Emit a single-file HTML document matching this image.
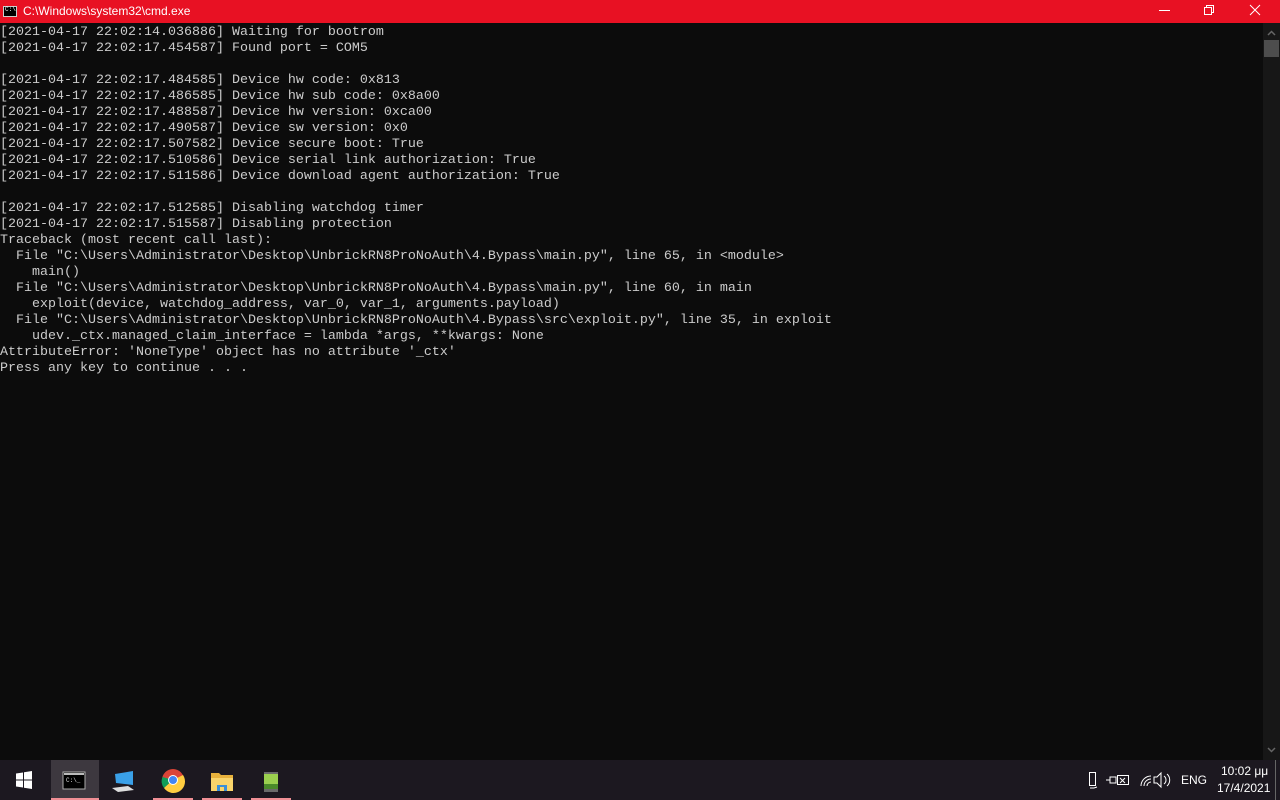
<!DOCTYPE html>
<html><head><meta charset="utf-8"><style>
*{margin:0;padding:0;box-sizing:border-box}
body{width:1280px;height:800px;overflow:hidden;background:#0c0c0c;position:relative;font-family:"Liberation Sans",sans-serif}
#title{position:absolute;left:0;top:0;width:1280px;height:23px;background:#e81123;color:#fff;font-size:12px}
#title .t{position:absolute;left:23px;top:4px}
#title .ic{position:absolute;left:3px;top:6px;width:14px;height:11px;background:#000;border:1px solid #ccc}
#title .ic:after{content:"C:\\";position:absolute;left:1px;top:-1px;font-size:6px;color:#fff;font-family:"Liberation Mono",monospace}
#con{position:absolute;left:0;top:25px;width:1263px;height:735px;background:#0c0c0c;color:#cccccc;font-family:"Liberation Mono",monospace;font-size:13.33px;line-height:16px;white-space:pre}
#sb{position:absolute;left:1263px;top:23px;width:17px;height:737px;background:#171717}
#thumb{position:absolute;left:1264px;top:40px;width:15px;height:17px;background:#4d4d4d}
#tb{position:absolute;left:0;top:760px;width:1280px;height:40px;background:#1c1820}
.u{position:absolute;top:798px;height:2px;background:#f08f95}
.tray{position:absolute;color:#fff;font-size:12px}
</style></head><body>
<div id="title"><div class="ic"></div><span class="t">C:\Windows\system32\cmd.exe</span>
<svg style="position:absolute;left:1130px;top:0" width="150" height="23">
<line x1="29" y1="10.5" x2="40" y2="10.5" stroke="#fff"/>
<rect x="74.5" y="7.5" width="7" height="7" fill="none" stroke="#fff"/>
<path d="M76.5 7.5V5.5H83.5V12.5H81.5" fill="none" stroke="#fff"/>
<path d="M120 5L130 15M130 5L120 15" stroke="#fff"/>
</svg></div>
<div id="con">[2021-04-17 22:02:14.036886] Waiting for bootrom
[2021-04-17 22:02:17.454587] Found port = COM5

[2021-04-17 22:02:17.484585] Device hw code: 0x813
[2021-04-17 22:02:17.486585] Device hw sub code: 0x8a00
[2021-04-17 22:02:17.488587] Device hw version: 0xca00
[2021-04-17 22:02:17.490587] Device sw version: 0x0
[2021-04-17 22:02:17.507582] Device secure boot: True
[2021-04-17 22:02:17.510586] Device serial link authorization: True
[2021-04-17 22:02:17.511586] Device download agent authorization: True

[2021-04-17 22:02:17.512585] Disabling watchdog timer
[2021-04-17 22:02:17.515587] Disabling protection
Traceback (most recent call last):
  File "C:\Users\Administrator\Desktop\UnbrickRN8ProNoAuth\4.Bypass\main.py", line 65, in &lt;module&gt;
    main()
  File "C:\Users\Administrator\Desktop\UnbrickRN8ProNoAuth\4.Bypass\main.py", line 60, in main
    exploit(device, watchdog_address, var_0, var_1, arguments.payload)
  File "C:\Users\Administrator\Desktop\UnbrickRN8ProNoAuth\4.Bypass\src\exploit.py", line 35, in exploit
    udev._ctx.managed_claim_interface = lambda *args, **kwargs: None
AttributeError: 'NoneType' object has no attribute '_ctx'
Press any key to continue . . .</div>
<div id="sb"></div><div id="thumb"></div>
<svg style="position:absolute;left:1263px;top:23px" width="17" height="737">
<path d="M5 12L8.5 8.5L12 12" fill="none" stroke="#666" stroke-width="1.5"/>
<path d="M5 725L8.5 728.5L12 725" fill="none" stroke="#666" stroke-width="1.5"/>
</svg>
<div id="tb"></div>
<div style="position:absolute;left:51px;top:760px;width:48px;height:40px;background:#3d383f"></div>
<div class="u" style="left:51px;width:48px"></div>
<div class="u" style="left:153px;width:40px"></div>
<div class="u" style="left:202px;width:40px"></div>
<div class="u" style="left:251px;width:40px"></div>
<svg style="position:absolute;left:0;top:760px" width="300" height="40">
<g fill="#fff"><path d="M16 13.5L23 12.5V19.5H16Z"/><path d="M24 12.3L32 11V19.5H24Z"/><path d="M16 20.5H23V27.5L16 26.5Z"/><path d="M24 20.5H32V29L24 27.7Z"/></g>
<rect x="63" y="12" width="22" height="17" fill="#000" stroke="#aaa"/><rect x="64" y="13" width="20" height="2" fill="#bbb"/>
<text x="66" y="22" font-size="6" fill="#ddd" font-family="Liberation Mono">C:\_</text>
<path d="M115 14L133 11V25L116 23Z" fill="#3aa0e8"/><path d="M112 28L128 26L134 30L118 32Z" fill="#ddd"/>
<circle cx="173" cy="20" r="11" fill="#db4437"/><path d="M173 20L164 28A11 11 0 0 1 162.5 17Z" fill="#0f9d58"/><path d="M173 20L183 15A11 11 0 0 1 164 28Z" fill="#ffcd40"/><circle cx="173" cy="20" r="5" fill="#fff"/><circle cx="173" cy="20" r="4" fill="#4285f4"/>
<path d="M211 13H219L221 15H233V31H211Z" fill="#e8b13c"/><path d="M211 18H233V31H211Z" fill="#f9d46b"/><path d="M217 31V25H227V31H224V27H220V31Z" fill="#3a8fd8"/>
<rect x="264" y="12" width="14" height="20" fill="#6a6a6a"/><rect x="264" y="14" width="14" height="10" fill="#9bd04f"/><rect x="264" y="24" width="14" height="5" fill="#4a8a2a"/>
</svg>
<svg style="position:absolute;left:1080px;top:760px" width="100" height="40">
<g fill="none" stroke="#fff"><rect x="9.5" y="12.5" width="6" height="13"/><path d="M10 28H14L17 27"/>
<path d="M26 20H30M30 17V23H36V17Z"/><rect x="37.5" y="15.5" width="11" height="9"/><path d="M40 18L45 23M45 18L40 23"/>
<path d="M61 26A10 10 0 0 1 71 16M64 26A7 7 0 0 1 71 19M67 26A4 4 0 0 1 71 22"/>
<path d="M74 17H77L81 13V27L77 23H74Z"/><path d="M84 16A5 5 0 0 1 84 24M87 14A8 8 0 0 1 87 26"/></g>
</svg>
<div class="tray" style="left:1181px;top:773px">ENG</div>
<div class="tray" style="left:1221px;top:764px">10:02 μμ</div>
<div class="tray" style="left:1217px;top:781px">17/4/2021</div>
<div style="position:absolute;left:1275px;top:760px;width:1px;height:40px;background:#666"></div>
</body></html>
